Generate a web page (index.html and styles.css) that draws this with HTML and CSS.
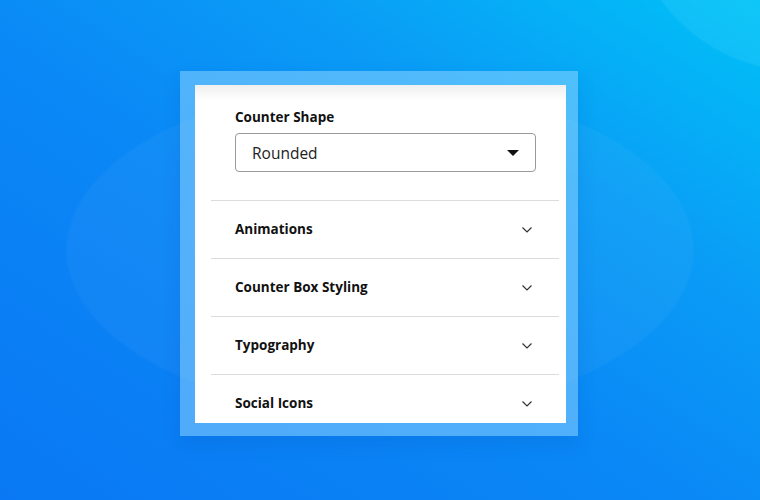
FILE: index.html
```html
<!DOCTYPE html>
<html lang="en">
<head>
  <meta charset="UTF-8">
  <meta name="viewport" content="width=device-width, initial-scale=1.0">
  <title>Counter Settings</title>
  <link rel="stylesheet" href="styles.css">
</head>
<body>
  <div class="frame">
    <div class="panel">
      <div class="field">
        <div class="field-label">Counter Shape</div>
        <div class="select">
          <span>Rounded</span>
          <span class="caret"></span>
        </div>
      </div>

      <!-- Collapsed sections -->
      <div class="row">
        <span class="row-title">Animations</span>
        <svg class="chevron" width="12" height="7" viewBox="0 0 12 7"><path d="M1.5 1.5l4.5 4.5 4.5-4.5" fill="none" stroke="#333" stroke-width="1.2"/></svg>
      </div>
      <div class="row">
        <span class="row-title">Counter Box Styling</span>
        <svg class="chevron" width="12" height="7" viewBox="0 0 12 7"><path d="M1.5 1.5l4.5 4.5 4.5-4.5" fill="none" stroke="#333" stroke-width="1.2"/></svg>
      </div>
      <div class="row">
        <span class="row-title">Typography</span>
        <svg class="chevron" width="12" height="7" viewBox="0 0 12 7"><path d="M1.5 1.5l4.5 4.5 4.5-4.5" fill="none" stroke="#333" stroke-width="1.2"/></svg>
      </div>
      <div class="row">
        <span class="row-title">Social Icons</span>
        <svg class="chevron" width="12" height="7" viewBox="0 0 12 7"><path d="M1.5 1.5l4.5 4.5 4.5-4.5" fill="none" stroke="#333" stroke-width="1.2"/></svg>
      </div>
    </div>
  </div>
</body>
</html>
```

FILE: styles.css
```css
html, body {
  margin: 0;
  padding: 0;
}

body {
  width: 760px;
  height: 500px;
  overflow: hidden;
  font-family: "Open Sans", sans-serif;
  background:
    radial-gradient(ellipse 315px 165px at 380px 250px, rgba(255, 255, 255, 0.035) 99%, rgba(255, 255, 255, 0) 100%),
    radial-gradient(circle 172px at 800px -100px, rgba(120, 235, 255, 0.12) 99%, rgba(120, 235, 255, 0) 100%),
    linear-gradient(to top right, #0a78f4 0%, #0a88f6 45%, #0a9cf6 70%, #00c2f7 100%);
}

.frame {
  width: 371px;
  height: 338px;
  margin: 71px 0 0 180px;
  padding: 14px 12px 13px 15px;
  background-color: rgba(150, 215, 255, 0.5);
  box-shadow: 0 8px 18px rgba(0, 40, 120, 0.1);
}

.panel {
  height: 338px;
  overflow: hidden;
  padding: 0 7px 0 16px;
  box-sizing: border-box;
  background: linear-gradient(#efefef, #ffffff 16px);
}

.field {
  padding: 22px 0 28px 24px;
}

.field-label {
  font-size: 13.5px;
  font-weight: 700;
  line-height: 20px;
  color: #111;
  margin-bottom: 6px;
}

.select {
  width: 301px;
  height: 39px;
  box-sizing: border-box;
  border: 1px solid #9a9a9a;
  border-radius: 4px;
  padding: 0 16px 0 16px;
  display: flex;
  justify-content: space-between;
  align-items: center;
  font-size: 15.5px;
  color: #222;
  background-color: white;
}

.caret {
  width: 0;
  height: 0;
  border-left: 6px solid transparent;
  border-right: 6px solid transparent;
  border-top: 6px solid #111;
  margin-top: 1px;
}

.row {
  height: 57px;
  border-top: 1px solid #dcdcdc;
  padding: 0 26px 0 24px;
  display: flex;
  justify-content: space-between;
  align-items: center;
  font-size: 13.5px;
  font-weight: 700;
  color: #111;
}

.row-title {
  padding-bottom: 2px;
}

.chevron {
  display: block;
}
```
